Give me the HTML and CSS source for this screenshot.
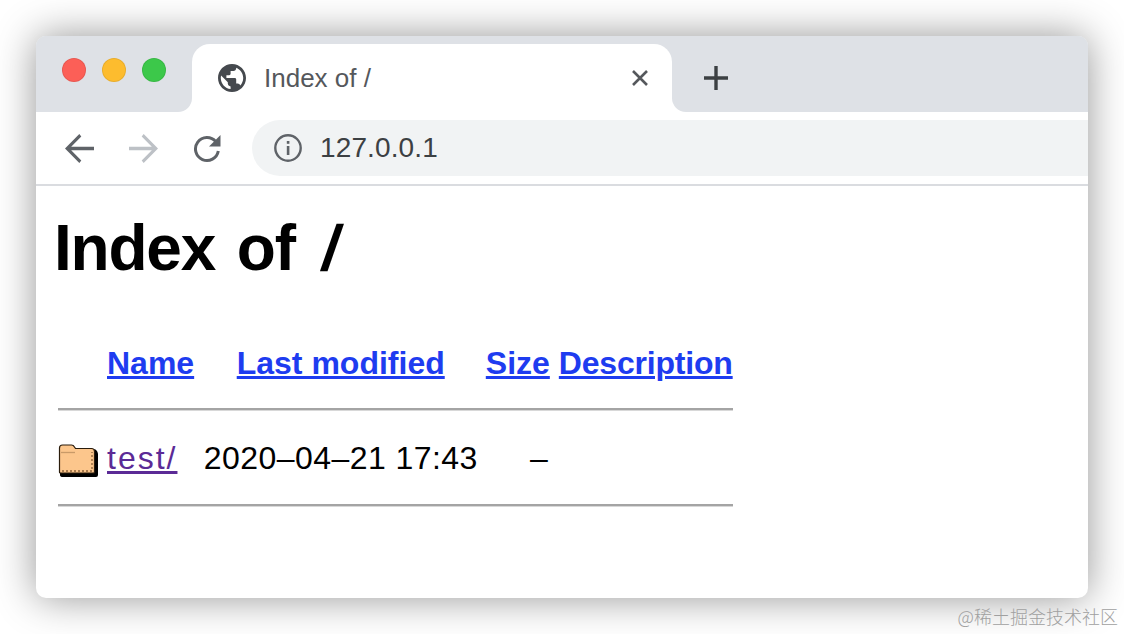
FILE: index.html
```html
<!DOCTYPE html>
<html lang="en">
<head>
<meta charset="utf-8">
<title>Index of /</title>
<link rel="stylesheet" href="styles.css">
</head>
<body>
<div class="window">
  <div class="strip">
    <div class="lights">
      <span class="light red"></span>
      <span class="light yellow"></span>
      <span class="light green"></span>
    </div>
    <div class="tab">
      <svg class="globe" viewBox="2 2 20 20"><path fill="#45494e" d="M12 2C6.480 2 2 6.480 2 12s4.480 10 10 10 10-4.480 10-10S17.520 2 12 2zm-1 17.930c-3.950-.49-7-3.850-7-7.930 0-.62.08-1.210.21-1.790L9 15v1c0 1.100.9 2 2 2v1.930zm6.900-2.540c-.26-.81-1-1.390-1.900-1.390h-1v-3c0-.55-.45-1-1-1H8v-2h2c.55 0 1-.45 1-1V7h2c1.100 0 2-.9 2-2v-.41c2.930 1.190 5 4.060 5 7.410 0 2.080-.8 3.970-2.100 5.390z"/></svg>
      <span class="tab-title">Index of /</span>
      <svg class="close" viewBox="0 0 18 18"><path d="M2 2l14 14M16 2L2 16" stroke="#55585c" stroke-width="2.600" fill="none"/></svg>
    </div>
    <div class="strip-rest">
      <svg class="plus" viewBox="0 0 24 24"><path d="M12 0v24M0 12h24" stroke="#3c4043" stroke-width="3.400" fill="none"/></svg>
    </div>
  </div>
  <div class="toolbar">
    <svg class="nav" viewBox="4 4 16 16"><path fill="#5f6368" d="M20 11.100H7.400l5.600-5.700L11.900 4 4 12l7.900 8 1.100-1.400-5.600-5.700H20z"/></svg>
    <svg class="nav" viewBox="4 4 16 16"><path fill="#bdc1c6" d="M4 11.100h12.600l-5.600-5.700L12.100 4 20 12l-7.900 8-1.100-1.400 5.600-5.700H4z"/></svg>
    <svg class="nav" viewBox="0 0 29 29"><path fill="none" stroke="#5f6368" stroke-width="3" d="M22.800 7.600A11.500 11.500 0 1 0 25.300 17"/><path fill="#5f6368" d="M16 12.500h11.500V1z"/></svg>
    <div class="omnibox">
      <svg class="info" viewBox="0 0 28 28"><circle cx="14" cy="14" r="12.700" fill="none" stroke="#5f6368" stroke-width="2.400"/><rect x="12.800" y="7" width="2.600" height="2.800" fill="#5f6368"/><rect x="12.800" y="12" width="2.600" height="9" fill="#5f6368"/></svg>
      <span class="url">127.0.0.1</span>
    </div>
  </div>
  <div class="page">
    <h1 class="title">Index of <span class="slash">/</span></h1>
    <table class="listing">
      <tr>
        <th class="col-icon"></th>
        <th class="col-name"><a class="link" href="#">Name</a></th>
        <th><a class="link" href="#">Last modified</a></th>
        <th class="col-size"><a class="link" href="#">Size</a></th>
        <th class="col-desc"><a class="link" href="#">Description</a></th>
      </tr>
      <tr><td colspan="5"><hr class="rule rule-top"></td></tr>
      <tr>
        <td class="col-icon">
          <svg class="folder" viewBox="0 1 40 43">
            <path fill="#000" d="M2 13q0-3 3-3h9q2 0 3 2l1 1h17q3 0 4 2 1 2 1 3v21q0 2-2 2H5q-3 0-3-2z"/>
            <path fill="#fcc68c" stroke="#2a1c0c" stroke-width="1.200" d="M1.500 12q0-3 3-3h9q2 0 3 2l1 1.500h16q3 0 3 3V36q0 1-1 1H2.500q-1 0-1-1z"/>
            <path fill="none" stroke="#c99a68" stroke-width="1.300" d="M3 16.500h14"/>
            <path fill="none" stroke="#8a6238" stroke-width="1.300" stroke-dasharray="2 2" d="M4 35h30V16"/>
          </svg>
        </td>
        <td><a class="visited" href="#">test/</a></td>
        <td class="date">2020–04–21 17:43</td>
        <td class="size">–</td>
        <td></td>
      </tr>
      <tr><td colspan="5"><hr class="rule"></td></tr>
    </table>
  </div>
</div>
<div class="watermark">@稀土掘金技术社区</div>
</body>
</html>
```
FILE: styles.css
```css
html, body {
  margin: 0;
  height: 100%;
  background: #fff;
  overflow: hidden;
}
body {
  padding: 36px 36px 0;
  box-sizing: border-box;
  font-family: "Liberation Sans", Arial, sans-serif;
  position: relative;
}
.window {
  width: 1052px;
  height: 562px;
  background: #fff;
  border-radius: 10px;
  overflow: hidden;
  box-shadow: 0 0 40px rgba(0, 0, 0, .42);
}
.strip {
  display: flex;
  height: 76px;
  background: linear-gradient(#dee1e6 50%, #fff 50%);
}
.lights {
  width: 156px;
  display: flex;
  gap: 16px;
  padding: 22px 0 0 26px;
  box-sizing: border-box;
  background: #dee1e6;
  border-bottom-right-radius: 14px;
}
.light {
  width: 24px;
  height: 24px;
  border-radius: 50%;
  box-sizing: border-box;
  border: 1px solid rgba(0, 0, 0, .08);
}
.red { background: #fc5f57; }
.yellow { background: #fdbc2e; }
.green { background: #3cc84a; }
.tab {
  width: 480px;
  margin-top: 8px;
  background: #fff;
  border-radius: 18px 18px 0 0;
  display: flex;
  align-items: center;
  padding: 0 23px 0 26px;
  box-sizing: border-box;
}
.globe {
  width: 28px;
  height: 28px;
}
.tab-title {
  margin-left: 18px;
  font-size: 26px;
  color: #55585c;
  flex: 1;
}
.close {
  width: 18px;
  height: 18px;
}
.strip-rest {
  flex: 1;
  background: #dee1e6;
  border-bottom-left-radius: 14px;
  padding: 30px 0 0 32px;
}
.plus {
  display: block;
  width: 24px;
  height: 24px;
}
.toolbar {
  height: 72px;
  border-bottom: 2px solid #dadce0;
  display: flex;
  align-items: center;
  padding-left: 29px;
  gap: 35px;
}
.nav {
  width: 29px;
  height: 29px;
}
.omnibox {
  flex: 1;
  height: 56px;
  margin-left: -5px;
  background: #f1f3f4;
  border-radius: 28px 0 0 28px;
  display: flex;
  align-items: center;
  padding-left: 22px;
}
.info {
  width: 28px;
  height: 28px;
}
.url {
  margin-left: 18px;
  font-size: 28px;
  letter-spacing: .12px;
  color: #3c4043;
}
.page {
  padding: 0 16px;
}
.title {
  margin: 25px 0 54px 2px;
  font-size: 64px;
  font-weight: bold;
  letter-spacing: -1.200px;
  word-spacing: 5px;
  color: #000;
}
.slash {
  display: inline-block;
  margin-left: 7px;
  transform: skewX(-9deg);
}
.listing {
  border-spacing: 4px;
  font-size: 32px;
  color: #000;
}
.listing th, .listing td {
  padding: 2px;
}
.listing .col-icon {
  width: 41px;
}
.listing .col-name {
  padding-right: 3.500px;
}
.listing .col-size {
  padding-right: 3px;
}
.col-desc {
  letter-spacing: -.2px;
}
.link {
  color: #1e3cf0;
}
.visited {
  color: #5b2a96;
  letter-spacing: 2px;
}
.date {
  letter-spacing: .45px;
}
.listing .size {
  text-align: right;
  padding-right: 5px;
}
.rule {
  margin: 16px 0;
  height: 0;
  border: 0;
  border-top: 2px solid #a4a4a4;
  border-bottom: 1px solid #d8d8d8;
}
.rule-top {
  margin: 18px 0 18px;
}
.folder {
  display: block;
  width: 40px;
  height: 43px;
}
.watermark {
  position: absolute;
  right: 6px;
  bottom: 5px;
  font-family: "Noto Sans CJK SC", sans-serif;
  font-size: 18px;
  font-weight: 300;
  color: #a0a0a0;
}
```
